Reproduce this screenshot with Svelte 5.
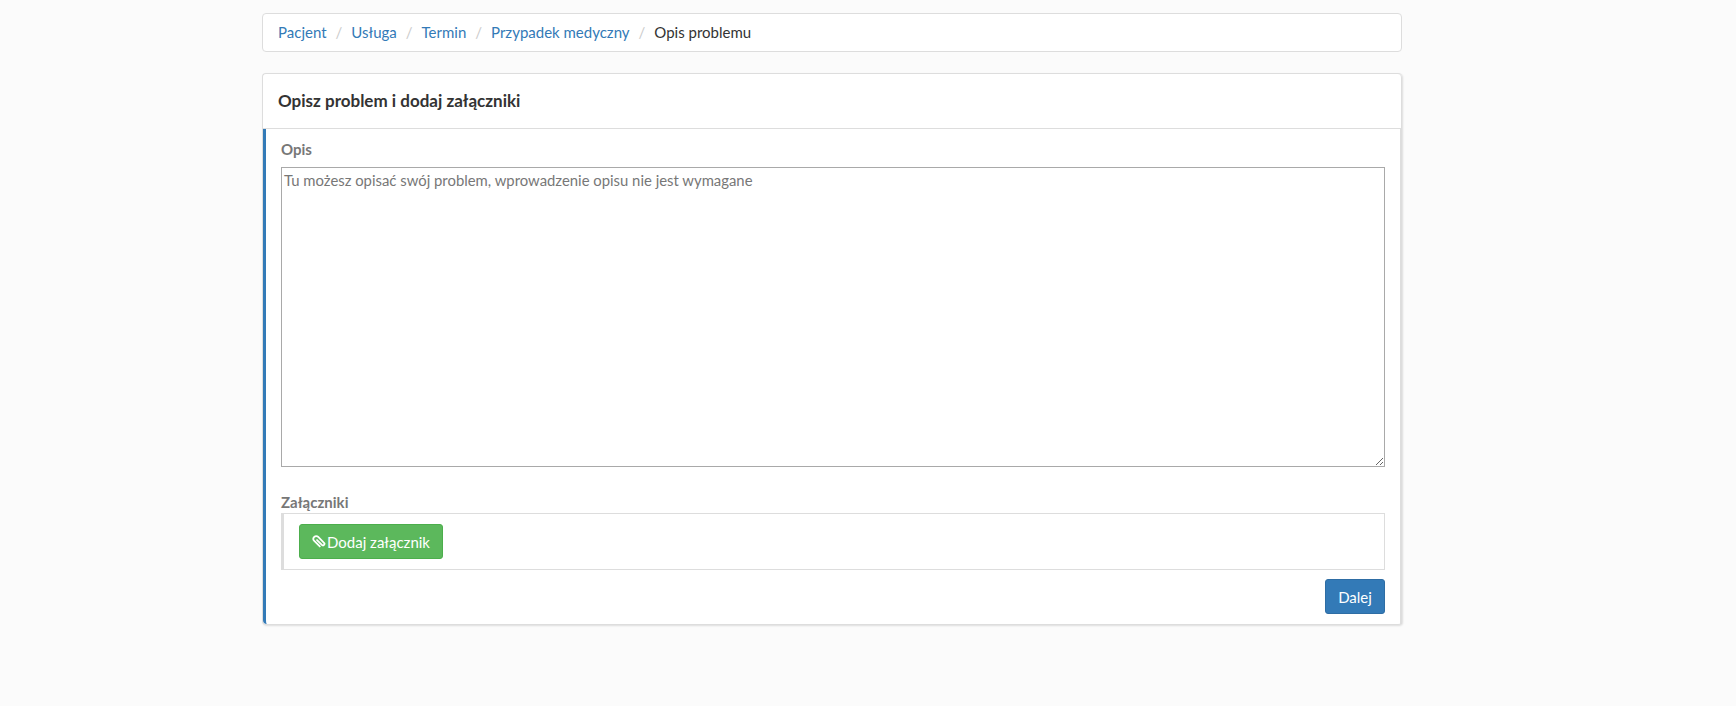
<script>
  const crumbs = ['Pacjent', 'Usługa', 'Termin', 'Przypadek medyczny'];
</script>

<div class="page">
  <ol class="breadcrumb">
    {#each crumbs as c}
      <li><a href="#top">{c}</a><span class="sep">/</span></li>
    {/each}
    <li class="active">Opis problemu</li>
  </ol>

  <section class="card">
    <header class="head"><h3>Opisz problem i dodaj załączniki</h3></header>
    <div class="body">
      <label class="lbl" for="opis">Opis</label>
      <textarea id="opis" placeholder="Tu możesz opisać swój problem, wprowadzenie opisu nie jest wymagane"></textarea>
      <div class="lbl att-label">Załączniki</div>
      <div class="att">
        <button class="btn green" type="button">
          <svg viewBox="-7.5 -7.5 15 15" width="14" height="14" aria-hidden="true">
            <path transform="rotate(-45)" d="M0 -3V4.4a1.6 1.6 0 0 0 3.2 0V-4.4a3 3 0 0 0-6 0V4" fill="none" stroke="currentColor" stroke-width="1.9" stroke-linecap="round"/>
          </svg>
          Dodaj załącznik
        </button>
      </div>
      <div class="actions"><button class="btn blue" type="button">Dalej</button></div>
    </div>
  </section>
</div>

<style>
  :global(body) {
    margin: 0;
    background: #fbfbfb;
    font-family: Lato, "Liberation Sans", sans-serif;
    font-size: 15px;
    color: #333;
  }
  .page {
    width: 1140px;
    height: 706px;
    margin-left: 262px;
    padding-top: 13px;
    box-sizing: border-box;
  }
  .breadcrumb {
    display: flex;
    list-style: none;
    margin: 0 0 21px;
    padding: 0 15px 1px;
    height: 39px;
    align-items: center;
    box-sizing: border-box;
    background: #fff;
    border: 1px solid #ddd;
    border-radius: 4px;
    line-height: 20px;
  }
  .breadcrumb a { color: #337ab7; text-decoration: none; }
  .sep { color: #ccc; padding: 0 9px; }
  .active { color: #333; }
  .card {
    background: #fff;
    border: 1px solid #ddd;
    border-right: 0;
    border-radius: 4px;
    box-shadow: 1px 1px 2px rgba(0, 0, 0, 0.12);
  }
  .head {
    height: 55px;
    padding: 0 15px 1px;
    display: flex;
    align-items: center;
    box-sizing: border-box;
    border-bottom: 1px solid #ddd;
    border-right: 1px solid #ddd;
    border-radius: 0 4px 0 0;
  }
  h3 { margin: 0; font-size: 17px; font-weight: 700; color: #333; }
  .body {
    border-left: 3px solid #337ab7;
    border-right: 2px solid #ddd;
    padding: 10px 0 10px 15px;
    border-radius: 0 0 0 4px;
    height: 495px;
    box-sizing: border-box;
  }
  .lbl {
    display: block;
    font-weight: 700;
    color: #777;
    line-height: 20px;
    margin-bottom: 8px;
  }
  textarea {
    display: block;
    box-sizing: border-box;
    width: 1104px;
    height: 300px;
    margin: 0;
    padding: 2px;
    border: 1px solid #a9a9a9;
    font: inherit;
    font-size: 14.86px;
    line-height: 20px;
    color: #333;
    background: #fff;
    resize: vertical;
    outline: none;
  }
  textarea::placeholder { color: #777; opacity: 1; }
  .att-label { margin: 25px 0 1px; }
  .att {
    box-sizing: border-box;
    width: 1104px;
    height: 57px;
    border: 1px solid #ddd;
    border-left-width: 3px;
    padding: 10px 0 0 15px;
  }
  .btn {
    display: inline-flex;
    align-items: center;
    justify-content: center;
    box-sizing: border-box;
    height: 35px;
    padding: 0 12px;
    font: inherit;
    color: #fff;
    border-radius: 3px;
    border: 1px solid transparent;
    gap: 1px;
  }
  .green { background: #5cb85c; border-color: #4cae4c; width: 144px; }
  .blue { background: #337ab7; border-color: #2e6da4; width: 60px; }
  .actions { width: 1104px; display: flex; justify-content: flex-end; margin-top: 9px; }
</style>
